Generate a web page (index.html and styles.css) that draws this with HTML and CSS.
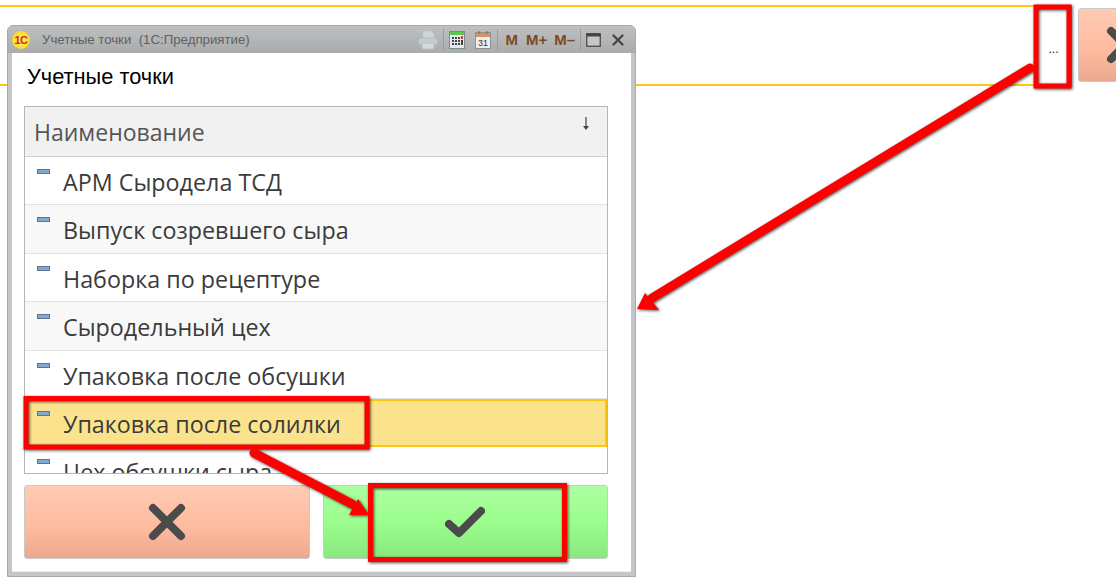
FILE: index.html
```html
<!DOCTYPE html>
<html>
<head>
  <title>Учетные точки</title>
  <link rel="stylesheet" href="styles.css">
</head>
<body>
  <div class="page">
    <div class="field-row">
      <div class="field"></div>
      <div class="pick">...</div>
      <div class="btn btn-cancel back-cancel">
        <svg width="38" height="38" viewBox="0 0 38 38"><path d="M5 5 L33 33 M33 5 L5 33" class="ico"/></svg>
      </div>
    </div>

    <div class="window">
      <div class="titlebar">
        <span class="logo">1С</span>
        <span class="title">Учетные точки&nbsp; (1С:Предприятие)</span>
        <div class="tools">
          <svg class="printer" width="22" height="20" viewBox="0 0 22 20">
            <path d="M6 1h8l3 3v5H6z" fill="#cfd6da" stroke="#bcc4c8"/>
            <rect x="1.5" y="8" width="19" height="7" rx="2" fill="#c4ccd0" stroke="#b0b8bc"/>
            <rect x="5" y="13" width="12" height="6" fill="#d4dadd" stroke="#b6bec2"/>
          </svg>
          <i class="sep"></i>
          <svg width="16" height="18" viewBox="0 0 16 18">
            <rect x=".5" y=".5" width="15" height="17" fill="#e4e8ea" stroke="#7d8a90"/>
            <rect x="1" y="1" width="14" height="3" fill="#58c850"/>
            <path d="M3 6h2v2H3zM6 6h2v2H6zM9 6h2v2H9zM3 9h2v2H3zM6 9h2v2H6zM9 9h2v2H9zM3 12h2v2H3zM6 12h2v2H6zM9 12h2v2H9zM12 9h2v5h-2z" fill="#444"/>
            <rect x="12" y="5" width="2" height="3" fill="#e03030"/>
          </svg>
          <svg class="cal" width="16" height="18" viewBox="0 0 16 18">
            <rect x=".5" y="1.5" width="15" height="16" fill="#eef0f0" stroke="#8a9296"/>
            <rect x="1" y="2" width="14" height="4" fill="#d8925c"/>
            <path d="M4 0v3M12 0v3" stroke="#777" stroke-width="1.2"/>
            <text x="8" y="15" class="cal-num">31</text>
          </svg>
          <i class="sep"></i>
          <span class="mem m1">M</span>
          <span class="mem">M+</span>
          <span class="mem">M–</span>
          <i class="sep"></i>
          <svg class="max" width="15" height="14" viewBox="0 0 15 14">
            <rect x=".75" y=".75" width="13.5" height="12.5" fill="#c4c6c7" stroke="#444" stroke-width="1.2"/>
            <rect x=".5" y=".5" width="14" height="3" fill="#444"/>
          </svg>
          <svg class="close" width="12" height="12" viewBox="0 0 12 12"><path d="M1.5 1.5 L10.5 10.5 M10.5 1.5 L1.5 10.5" stroke="#444" stroke-width="2.2" stroke-linecap="round"/></svg>
        </div>
      </div>

      <div class="content">
        <h1>Учетные точки</h1>
        <div class="grid">
          <div class="grid-head">
            <span>Наименование</span>
            <svg class="sort" width="8" height="14" viewBox="0 0 8 14"><path d="M4 0v11" stroke="#444" stroke-width="1.2"/><path d="M1 9h6l-3 4z" fill="#444"/></svg>
          </div>
          <div class="row"><i class="mark"></i>АРМ Сыродела ТСД</div>
          <div class="row alt"><i class="mark"></i>Выпуск созревшего сыра</div>
          <div class="row"><i class="mark"></i>Наборка по рецептуре</div>
          <div class="row alt"><i class="mark"></i>Сыродельный цех</div>
          <div class="row"><i class="mark"></i>Упаковка после обсушки</div>
          <div class="row sel"><i class="mark"></i>Упаковка после солилки</div>
          <div class="row"><i class="mark"></i>Цех обсушки сыра</div>
        </div>
        <div class="actions">
          <div class="btn btn-cancel">
            <svg width="38" height="38" viewBox="0 0 38 38"><path d="M5 5 L33 33 M33 5 L5 33" class="ico"/></svg>
          </div>
          <div class="btn btn-ok">
            <svg width="40" height="32" viewBox="0 0 40 32"><path d="M4 18 L14 27 L36 5" class="ico"/></svg>
          </div>
        </div>
      </div>
    </div>

    <!-- red marks drawn over the screenshot -->
    <svg class="marks" width="1116" height="578" viewBox="0 0 1116 578">
      <g fill="none" stroke="#f00" stroke-width="5">
        <rect x="1036" y="7" width="33" height="79"/>
        <rect x="26" y="398.500" width="341" height="48.500"/>
        <rect x="370.500" y="485.500" width="194" height="74"/>
      </g>
      <path d="M1030 68 L652 298" stroke="#f00" stroke-width="9" stroke-linecap="round" fill="none"/>
      <path d="M637 309 L645 293 L659 310 Z" fill="#f00"/>
      <path d="M254 453 L352 504" stroke="#f00" stroke-width="9" stroke-linecap="round" fill="none"/>
      <path d="M369 515 L358 499 L349 515 Z" fill="#f00"/>
    </svg>
  </div>
</body>
</html>
```

FILE: styles.css
```css
html, body { margin: 0; padding: 0; background: #fff; }
.page {
  position: relative;
  width: 1116px; height: 578px;
  overflow: hidden;
  font-family: 'Open Sans', sans-serif;
}

.field-row { display: flex; align-items: flex-start; padding-top: 5px; }
.field {
  flex: none;
  width: 1040px; height: 77px;
  border-top: 2px solid #fdc60f;
  border-bottom: 2px solid #fdc60f;
}
.pick {
  flex: none;
  width: 27px; height: 77px;
  border: 2px solid #fdc60f;
  border-width: 2px 1px 2px 0;
  padding-right: 4px;
  margin-right: -4px;
  font: 12px/84px 'Liberation Sans', sans-serif;
  text-align: center;
  color: #111;
}

.window {
  position: absolute;
  left: 7px; top: 25px;
  width: 629px; height: 552px;
  box-sizing: border-box;
  background: #c4c6c7;
  border: 1px solid #a8a8a8;
  border-radius: 6px 6px 0 0;
  padding: 0 4px 4px;
  display: flex; flex-direction: column;
}
.titlebar {
  height: 27px;
  margin: 0 -4px;
  padding: 0 11px 0 4px;
  display: flex; align-items: center;
  background: linear-gradient(#bdbfc0, #a9abac);
  border-radius: 5px 5px 0 0;
}
.logo {
  width: 18px; height: 18px;
  border-radius: 50%;
  background: radial-gradient(#fff36a, #f8cf10);
  color: #d8231f;
  font: bold 11px/18px 'Liberation Sans', sans-serif;
  letter-spacing: -0.5px;
  text-align: center;
}
.title {
  margin-left: 12px;
  font: 13.250px 'Liberation Sans', sans-serif;
  color: #5f6162;
}
.tools { margin-left: auto; display: flex; align-items: center; }
.printer { margin-right: -2px; }
.sep { width: 1px; height: 22px; background: #999b9c; }
.tools svg + .sep { margin-left: 6px; }
.tools .sep + svg { margin-left: 5px; }
.tools .cal { margin-left: 10px; }
.cal-num { font: 9px 'Liberation Sans', sans-serif; text-anchor: middle; fill: #333; }
.mem {
  font: bold 15px 'Liberation Sans', sans-serif;
  color: #7b4a1e;
  margin-left: 7px;
}
.mem:last-of-type { margin-right: 5px; }
.m1 { margin-right: 1px; }
.tools .max { margin-left: 6px; }
.close { margin-left: 11px; }

.content {
  flex: 1;
  background: #fff;
  border-bottom: 1px solid #eee;
  padding: 0 23px 12px 12px;
  display: flex; flex-direction: column;
}
h1 {
  margin: 11px 0 16px 3px;
  font: normal 21.800px/26px 'Liberation Sans', sans-serif;
  color: #000;
}
.grid {
  height: 368px;
  box-sizing: border-box;
  border: 1px solid #b5b5b5;
  overflow: hidden;
  flex: none;
}
.grid-head {
  height: 50px;
  box-sizing: border-box;
  background: #f1f1f1;
  border-bottom: 1px solid #cfcfcf;
  padding: 9px 17px 0 9px;
  display: flex; justify-content: space-between; align-items: flex-start;
  font-size: 23px; line-height: 32px;
  color: #555;
}
.sort { margin-top: 1px; }
.row {
  position: relative;
  height: 48.400px;
  box-sizing: border-box;
  padding-left: 38px;
  border-bottom: 1px solid #e2e2e2;
  font-size: 23.300px; line-height: 50px;
  color: #3b3b3b;
  white-space: nowrap;
}
.row.alt { background: #f8f8f8; }
.row.sel {
  background: #fbe38e;
  border: 2px solid #fdc60f;
  padding-left: 36px;
  line-height: 46px;
}
.mark {
  position: absolute;
  left: 12px; top: 12px;
  width: 11px; height: 3px;
  background: #7fa9d0;
  border: 1px solid #5a7890;
}
.row.sel .mark { left: 10px; top: 10px; }

.actions { display: flex; gap: 13px; margin-top: 11px; height: 74px; }
.btn {
  display: flex; align-items: center; justify-content: center;
  box-sizing: border-box;
  border: 1px solid #c9c9c9;
  border-radius: 3px;
}
.actions .btn { flex: 1; }
.back-cancel {
  flex: none;
  width: 120px; height: 74px;
  margin: 3px 0 0 10px;
  justify-content: flex-start;
  padding-left: 27px;
}
.btn-cancel { background: linear-gradient(#fecbb4, #feba9e 60%, #eaa88e); }
.btn-ok { background: linear-gradient(#aeffa2, #9bfd8c 50%, #8ae77e); }
.ico { fill: none; stroke: #4b4b4b; stroke-width: 8; stroke-linecap: round; stroke-linejoin: round; }

.marks {
  position: absolute;
  left: 0; top: 0;
  filter: drop-shadow(1.500px 1.500px 1.500px rgba(0,0,0,0.7));
}
```
